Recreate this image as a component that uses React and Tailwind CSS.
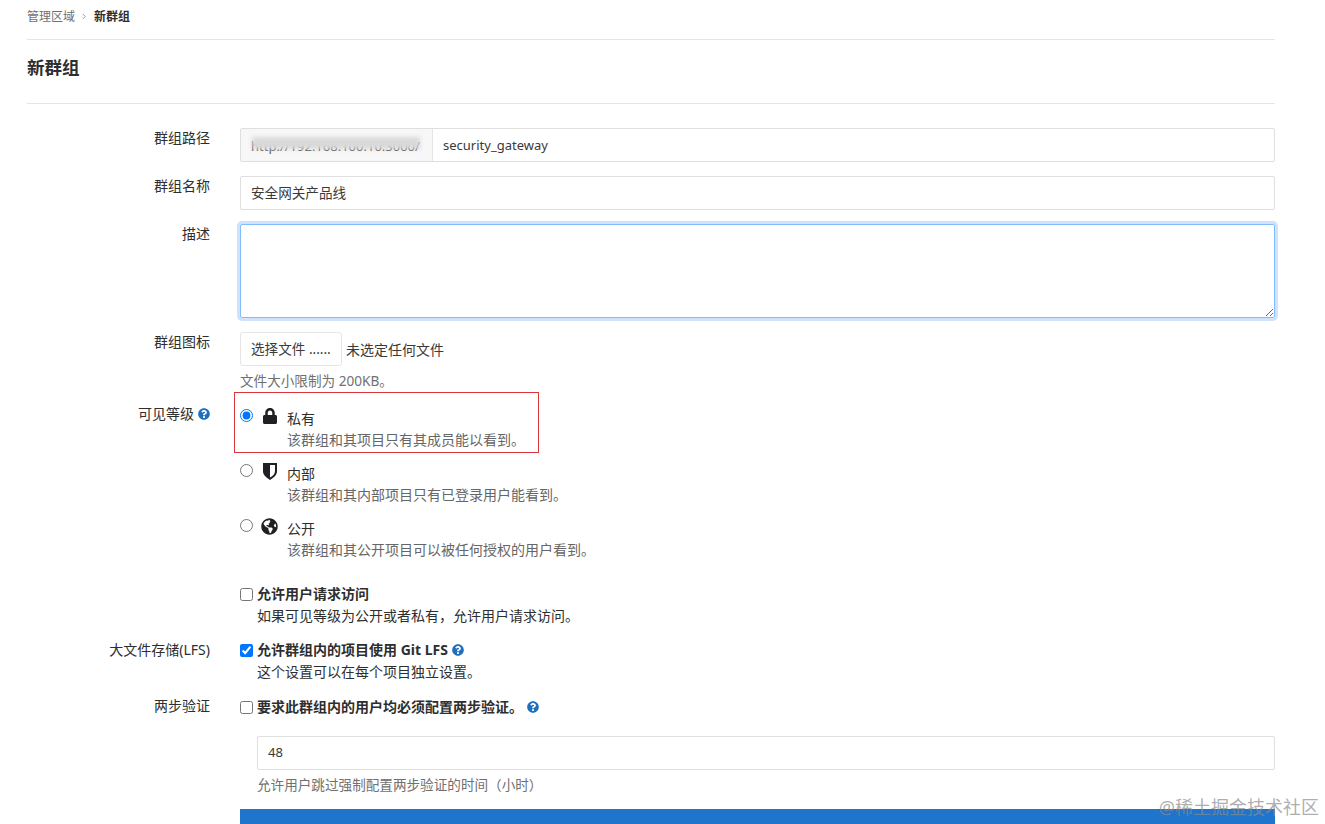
import React from 'react';
import { FaLock, FaQuestionCircle, FaGlobeAmericas } from 'react-icons/fa';

const Label = ({ children, className = '' }) => (
  <div className={`w-[183px] shrink-0 text-right text-[14px] leading-[20px] text-[#2e2e2e] ${className}`}>{children}</div>
);

const Help = ({ className = '' }) => <FaQuestionCircle className={`text-[#1f6fbd] w-[12px] h-[12px] shrink-0 ${className}`} />;

const ShieldHalf = () => (
  <svg viewBox="1 1 14 17" className="w-[14px] h-[17px]">
    <path d="M1 1h14v8c0 4-3 6.500-7 9C4 15.500 1 13 1 9z" fill="#1f1f24" />
    <path d="M8 3h5v6c0 2.800-2 4.700-5 6.600z" fill="#fff" />
  </svg>
);

const Radio = ({ checked }) => (
  <input type="radio" readOnly checked={checked} className="block w-[13px] h-[13px] m-0 accent-[#0075ff]" />
);

const Level = ({ icon, title, desc, checked, className = '' }) => (
  <div className={`flex ${className}`}>
    <div className="w-[23px] pt-[1px]"><Radio checked={checked} /></div>
    <div className="w-[24px]">{icon}</div>
    <div className="text-[14px] text-[#2e2e2e]">
      <div className="leading-[20px] pt-[1px]">{title}</div>
      <div className="leading-[22px] text-[#666]">{desc}</div>
    </div>
  </div>
);

const Check = ({ checked }) => (
  <input type="checkbox" readOnly checked={checked} className="w-[13px] h-[13px] m-0 accent-[#0075ff] shrink-0" />
);

export default function App() {
  return (
    <div className="relative h-[824px] overflow-hidden bg-white pl-[27px] pr-[50px] font-['Noto_Sans','Noto_Sans_CJK_SC',sans-serif]">
      <nav className="h-[40px] border-b border-[#e5e5e5] flex items-center gap-[7px] pb-[6px] text-[12px]">
        <span className="text-[#707070]">管理区域</span>
        <svg viewBox="0 0 6 8" className="w-[5px] h-[7px]"><path d="M1 1l3 3-3 3" fill="none" stroke="#888" /></svg>
        <span className="font-semibold text-[#2e2e2e]">新群组</span>
      </nav>

      <h1 className="h-[64px] border-b border-[#e5e5e5] pt-[13px] text-[17.5px] leading-[28px] font-semibold text-[#2e2e2e]">新群组</h1>

      <div className="flex gap-[30px] mt-[24px]">
        <Label>群组路径</Label>
        <div className="flex-1 flex h-[34px] border border-[#dfdfdf] rounded-[2px] text-[13px]">
          <div className="relative w-[192px] bg-[#f7f7f7] border-r border-[#e5e5e5] pl-[10px] flex items-center overflow-hidden">
            <span className="text-[13px] text-[#555] whitespace-nowrap translate-y-[2px]">http://192.168.100.10:3000/</span>
            <div className="absolute left-[11px] right-[12px] top-[8px] h-[12px] bg-[#d9d9d9] blur-[2px]" />
          </div>
          <div className="px-[10px] flex items-center text-[#3a3a3a] translate-y-[1px]">security_gateway</div>
        </div>
      </div>

      <div className="flex gap-[30px] mt-[14px]">
        <Label>群组名称</Label>
        <div className="flex-1 h-[34px] border border-[#dfdfdf] rounded-[2px] px-[10px] flex items-center text-[13.6px] text-[#3a3a3a]">安全网关产品线</div>
      </div>

      <div className="flex gap-[30px] mt-[14px]">
        <Label>描述</Label>
        <textarea readOnly className="flex-1 h-[94px] block border border-[#80bdff] rounded-[2px] shadow-[0_0_0_3px_#cfe3ff] outline-none" />
      </div>

      <div className="flex gap-[30px] mt-[14px]">
        <Label>群组图标</Label>
        <div>
          <div className="flex items-center gap-[4px] text-[14px] text-[#3a3a3a]">
            <div className="w-[102px] h-[34px] border border-[#e5e5e5] rounded-[3px] flex items-center pl-[10px] whitespace-nowrap text-[13.6px]">选择文件 ......</div>
            <span>未选定任何文件</span>
          </div>
          <p className="mt-[5px] text-[13.6px] leading-[20px] text-[#707070]">文件大小限制为 200KB。</p>
        </div>
      </div>

      <div className="flex gap-[30px] mt-[1px]">
        <Label className="mt-[12px] h-[20px] flex items-center justify-end gap-[4px]">可见等级 <Help /></Label>
        <div>
          <div className="relative w-[299px] h-[61px] pt-[16px]">
            <div className="absolute -left-[6px] top-0 w-[305px] h-[61px] border border-[#d9363e]" />
            <Level checked icon={<FaLock className="w-[14px] h-[16px] text-[#1f1f24]" />} title="私有" desc="该群组和其项目只有其成员能以看到。" />
          </div>
          <Level className="mt-[10px]" icon={<ShieldHalf />} title="内部" desc="该群组和其内部项目只有已登录用户能看到。" />
          <Level className="mt-[12px]" icon={<FaGlobeAmericas className="-ml-[2px] w-[17px] h-[17px] text-[#1f1f24]" />} title="公开" desc="该群组和其公开项目可以被任何授权的用户看到。" />
        </div>
      </div>

      <div className="flex gap-[30px] mt-[22px]">
        <Label />
        <div>
          <div className="flex items-center gap-[4px] text-[14px] leading-[22px] font-bold text-[#2e2e2e]"><Check />允许用户请求访问</div>
          <div className="pl-[17px] text-[14px] leading-[22px] text-[#2e2e2e]">如果可见等级为公开或者私有，允许用户请求访问。</div>
        </div>
      </div>

      <div className="flex gap-[30px] mt-[12px]">
        <Label className="pt-[1px]">大文件存储(LFS)</Label>
        <div>
          <div className="flex items-center gap-[4px] text-[14px] leading-[22px] font-bold text-[#2e2e2e]"><Check checked />允许群组内的项目使用 Git LFS<Help className="-ml-[0px]" /></div>
          <div className="pl-[17px] text-[14px] leading-[22px] text-[#2e2e2e]">这个设置可以在每个项目独立设置。</div>
        </div>
      </div>

      <div className="flex gap-[30px] mt-[13px]">
        <Label>两步验证</Label>
        <div className="flex-1">
          <div className="flex items-center gap-[4px] text-[14px] leading-[22px] font-bold text-[#2e2e2e]"><Check />要求此群组内的用户均必须配置两步验证。<Help /></div>
          <div className="pl-[17px] mt-[18px]">
            <div className="h-[34px] border border-[#dfdfdf] rounded-[2px] px-[10px] flex items-center text-[13px] text-[#3a3a3a]">48</div>
            <p className="mt-[5px] text-[13.6px] leading-[20px] text-[#707070] [text-spacing-trim:space-all]">允许用户跳过强制配置两步验证的时间（小时）</p>
          </div>
          <div className="mt-[14px] h-[40px] bg-[#1f75cb]" />
        </div>
      </div>

      <div className="absolute right-[6px] bottom-[7px] text-[18px] leading-[20px] text-[#8a8a8a]/70">@稀土掘金技术社区</div>
    </div>
  );
}
